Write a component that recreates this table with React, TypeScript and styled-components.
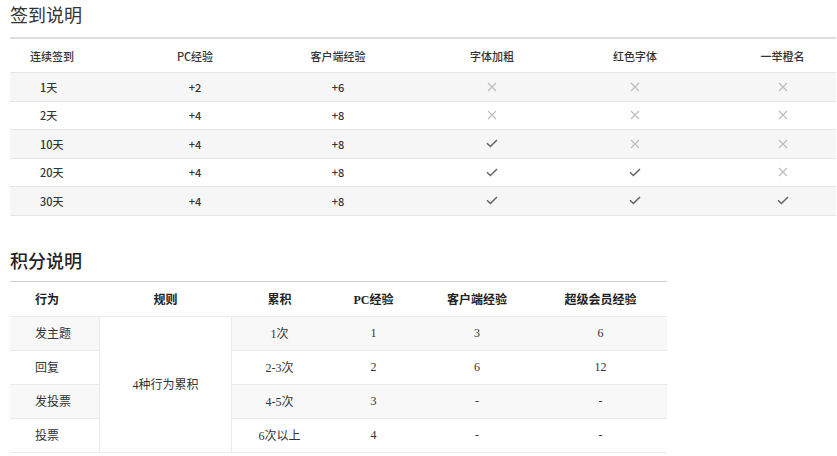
import React from "react";
import styled, { createGlobalStyle } from "styled-components";

const GlobalStyle = createGlobalStyle`
  html, body { margin: 0; padding: 0; background: #fff; }
  body { font-family: "Noto Sans CJK SC", "Noto Sans", sans-serif; color: #333; }
`;

const Page = styled.div`
  padding: 0 0 0 10px;
  width: 827px;
  box-sizing: border-box;
`;

const Title = styled.h2<{ $second?: boolean }>`
  margin: ${(p) => (p.$second ? "32px 0 9px" : "0 0 11px")};
  padding-top: ${(p) => (p.$second ? "0" : "2px")};
  font-size: 18px;
  line-height: 24px;
  font-weight: ${(p) => (p.$second ? 500 : 400)};
  color: ${(p) => (p.$second ? "#222" : "#333")};
  font-family: "Noto Sans CJK SC", sans-serif;
`;

/* ---------- Sign-in table ---------- */

const SignTable = styled.div`
  width: 826px;
  border-top: 2px solid #dedede;
  font-size: 11px;
`;

const SignRow = styled.div<{ $head?: boolean; $striped?: boolean }>`
  display: grid;
  grid-template-columns: 147px 76px 210px 98px 188px 107px;
  align-items: center;
  height: ${(p) => (p.$head ? "33px" : "27.5px")};
  border-bottom: 1px solid #e6e6e6;
  background: ${(p) => (p.$striped ? "#f6f6f6" : "#fff")};
  color: #333;
`;

const SignCell = styled.div<{ $first?: boolean; $head?: boolean }>`
  display: flex;
  align-items: center;
  justify-content: ${(p) => (p.$first ? "flex-start" : "center")};
  padding-left: ${(p) => (p.$first ? (p.$head ? "20px" : "30px") : "0")};
  font-weight: 500;
  white-space: nowrap;
`;

const Cross = () => (
  <svg width="10" height="10" viewBox="0 0 10 10">
    <path d="M1 1 L9 9 M9 1 L1 9" stroke="#bdbdbd" strokeWidth="1.2" fill="none" />
  </svg>
);

const Check = () => (
  <svg width="12" height="9" viewBox="0 0 12 9">
    <path d="M1 4.2 L4.4 7.5 L11 1" stroke="#666" strokeWidth="1.6" fill="none" />
  </svg>
);

const signHead = ["连续签到", "PC经验", "客户端经验", "字体加粗", "红色字体", "一举橙名"];
const signRows: [string, string, string, boolean, boolean, boolean][] = [
  ["1天", "+2", "+6", false, false, false],
  ["2天", "+4", "+8", false, false, false],
  ["10天", "+4", "+8", true, false, false],
  ["20天", "+4", "+8", true, true, false],
  ["30天", "+4", "+8", true, true, true],
];

/* ---------- Points table ---------- */

const PointsTable = styled.div`
  width: 657px;
  display: grid;
  grid-template-columns: 89px 133px 95px 93px 114px 133px;
  grid-template-rows: 35px repeat(4, 34px);
  border-top: 1px solid #cfcfcf;
  font-family: "Liberation Serif", "Noto Sans CJK SC", serif;
  font-size: 12px;
  color: #333;
`;

const PCell = styled.div<{ $head?: boolean; $shade?: boolean; $left?: boolean }>`
  display: flex;
  align-items: center;
  justify-content: ${(p) => (p.$left ? "flex-start" : "center")};
  padding-left: ${(p) => (p.$left ? "25px" : "0")};
  box-sizing: border-box;
  border-bottom: 1px solid #ebebeb;
  background: ${(p) => (p.$shade ? "#f8f8f8" : "#fff")};
  font-weight: ${(p) => (p.$head ? 700 : 400)};
  color: ${(p) => (p.$head ? "#222" : "#333")};
  white-space: nowrap;
`;

const RuleCell = styled(PCell)`
  grid-column: 2;
  grid-row: 2 / span 4;
  border-left: 1px solid #ebebeb;
  border-right: 1px solid #ebebeb;
`;

const pointHead = ["行为", "规则", "累积", "PC经验", "客户端经验", "超级会员经验"];
const pointRows = [
  ["发主题", "1次", "1", "3", "6"],
  ["回复", "2-3次", "2", "6", "12"],
  ["发投票", "4-5次", "3", "-", "-"],
  ["投票", "6次以上", "4", "-", "-"],
];

export default function App() {
  return (
    <>
      <GlobalStyle />
      <Page>
        <Title>签到说明</Title>
        <SignTable>
          <SignRow $head>
            {signHead.map((h, i) => (
              <SignCell key={h} $head $first={i === 0}>
                {h}
              </SignCell>
            ))}
          </SignRow>
          {signRows.map((r, ri) => (
            <SignRow key={r[0]} $striped={ri % 2 === 0}>
              <SignCell $first>{r[0]}</SignCell>
              <SignCell>{r[1]}</SignCell>
              <SignCell>{r[2]}</SignCell>
              {[r[3], r[4], r[5]].map((ok, i) => (
                <SignCell key={i}>{ok ? <Check /> : <Cross />}</SignCell>
              ))}
            </SignRow>
          ))}
        </SignTable>

        <Title $second>积分说明</Title>
        <PointsTable>
          {pointHead.map((h, i) => (
            <PCell key={h} $head $left={i === 0}>
              {h}
            </PCell>
          ))}
          <RuleCell>4种行为累积</RuleCell>
          {pointRows.map((r, ri) =>
            r.map((v, ci) => (
              <PCell key={`${ri}-${ci}`} $shade={ri % 2 === 0} $left={ci === 0}>
                {v}
              </PCell>
            ))
          )}
        </PointsTable>
      </Page>
    </>
  );
}
